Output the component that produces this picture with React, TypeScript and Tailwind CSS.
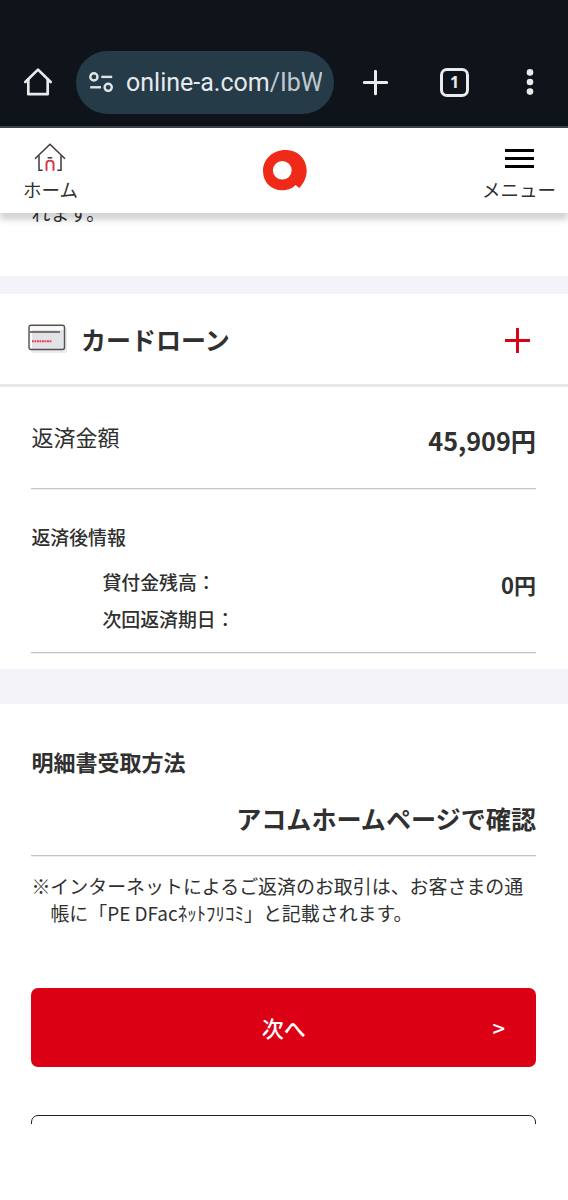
import React from 'react';

function HomeOutline() {
  return (
    <svg width="30" height="30" viewBox="0 0 30 30" fill="none" stroke="#e9eaeb" strokeWidth="2.7" strokeLinejoin="round" strokeLinecap="round">
      <path d="M2.3 15 L15 2.6 L27.7 15" />
      <path d="M5.3 12.5 V27.2 H24.7 V12.5" />
    </svg>
  );
}

function SiteSettingsIcon() {
  return (
    <svg width="24" height="20" viewBox="0 0 24 20" fill="none" stroke="#dfe5e8" strokeWidth="2.4">
      <circle cx="4.9" cy="4.9" r="3.6" />
      <path d="M12.3 4.9 H23.2" />
      <path d="M1.2 15.3 H12" />
      <circle cx="19.2" cy="15.3" r="3.6" />
    </svg>
  );
}

function BrowserBar() {
  return (
    <div className="flex h-32 items-end border-b-2 border-[#3b4248] bg-[#0f141a] pb-[12.5px]">
      <div className="flex h-[63px] w-full items-center">
        <div className="ml-[23px] w-[53px]">
          <HomeOutline />
        </div>
        <div className="flex h-[63px] w-[258px] shrink-0 items-center rounded-full bg-[#253b48] pl-[13px] pr-3">
          <SiteSettingsIcon />
          <div className="ml-[13px] flex-1 overflow-hidden whitespace-nowrap pt-[2px] font-[Roboto,sans-serif] text-[25px] leading-8 text-[#e6e9ec]">
            online-a.com<span className="text-[#c0c8cf]">/IbW</span>
          </div>
        </div>
        <svg className="ml-[28px] shrink-0" width="27" height="27" viewBox="0 0 27 27" stroke="#e9eaeb" strokeWidth="3" strokeLinecap="round">
          <path d="M13.5 2.3 V24.7 M2.3 13.5 H24.7" />
        </svg>
        <div className="ml-[51px] flex size-[29px] shrink-0 items-center justify-center rounded-[7px] border-[3px] border-[#e9eaeb] font-['Noto_Sans',sans-serif] text-[16px] font-bold leading-none text-[#e9eaeb]">
          1
        </div>
        <svg className="ml-[57px] shrink-0" width="8" height="28" viewBox="0 0 8 28" fill="#e9eaeb">
          <circle cx="4" cy="4.4" r="3.3" />
          <circle cx="4" cy="14" r="3.3" />
          <circle cx="4" cy="23.6" r="3.3" />
        </svg>
      </div>
    </div>
  );
}

function SiteHeader() {
  return (
    <header className="relative z-10 flex h-[85px] justify-between bg-white shadow-[0_7px_6px_rgba(0,0,0,0.17)]">
      <div className="ml-[22px] flex w-[57px] flex-col items-center pt-[15px]">
        <svg className="-ml-px" width="32" height="29" viewBox="0 0 32 29" fill="none" stroke="#40383a" strokeWidth="1.5">
          <path d="M1 15.8 L16 1.3 L31 15.8" />
          <path d="M5 12.5 V27.3 H8.7 M27 12.5 V27.3 H23.3" />
          <path d="M13.6 14.8 H18.2" />
          <path d="M12.5 27.8 V20.5 Q12.5 17.6 16 17.6 Q19.5 17.6 19.5 20.5 V27.8" stroke="#d9333f" strokeWidth="1.9" />
        </svg>
        <span className="mt-[4px] whitespace-nowrap text-[18.5px] leading-[26px]">ホーム</span>
      </div>
      <svg className="ml-[9px] mt-[22px]" width="44" height="41" viewBox="0 0 44 41">
        <path
          fill="#f02a18"
          fillRule="evenodd"
          d="M22.5 0 C34.5 0 43.7 8.5 43.7 20.5 C43.7 27.5 40.8 33.2 36.2 38 L32.6 35 C29 38.8 24.5 40.3 19 40.3 C8 40.3 0 32 0 21 C0 8.8 10 0 22.5 0 Z M19.3 11 A9.4 9.3 0 1 0 19.3 29.6 A9.4 9.3 0 1 0 19.3 11 Z"
        />
      </svg>
      <div className="mr-[11px] flex w-[76px] flex-col items-center pt-[21px]">
        <div className="flex w-[29px] flex-col gap-[5px]">
          <span className="h-[3px] bg-black" />
          <span className="h-[3px] bg-black" />
          <span className="h-[3px] bg-black" />
        </div>
        <span className="mt-[8px] whitespace-nowrap text-[18.5px] leading-[26px]">メニュー</span>
      </div>
    </header>
  );
}

function CardIcon() {
  return (
    <svg width="40" height="30" viewBox="0 0 40 30" fill="none">
      <rect x="3" y="3" width="36" height="26" rx="2" fill="#e9e9f1" />
      <rect x="1" y="1.2" width="35.5" height="24.3" rx="2" fill="#e1e3e6" />
      <path d="M2 2.2 H35.5 V6 H2 Z M2 6 H4 V24.5 H2 Z" fill="#fafafa" />
      <rect x="1" y="1.2" width="35.5" height="24.3" rx="2" stroke="#5a5051" strokeWidth="1.4" />
      <path d="M2 8 H32" stroke="#665d5e" strokeWidth="1.7" />
      <path d="M4 17.2 H24" stroke="#e64550" strokeWidth="2" strokeDasharray="1.9 0.6" />
    </svg>
  );
}

const Divider = () => <div className="h-px bg-[#c5c5c5] shadow-[0_1px_0_#eeeeee]" />;

export default function App() {
  return (
    <div
      lang="ja"
      className="h-[1200px] w-[568px] overflow-hidden bg-white font-['Noto_Sans_CJK_JP',sans-serif] text-[#303030]"
    >
      <BrowserBar />
      <SiteHeader />

      {/* tail of the previous note, scrolled under the header */}
      <div className="flex h-[63px] items-start px-[31.5px]">
        <p className="-mt-[14px] text-[18.9px] leading-[27px]">れます。</p>
      </div>
      <div className="h-[18px] bg-[#f4f3f9]" />

      <div className="flex h-[93px] items-center border-b-[3px] border-[#e8e8e8] pl-7">
        <CardIcon />
        <h2 className="ml-[13px] text-[25px] font-bold leading-9">カードローン</h2>
        <svg className="ml-auto mr-[37px] mt-[3px]" width="27" height="27" viewBox="0 0 27 27" stroke="#dc0014" strokeWidth="3">
          <path d="M13.5 1 V26 M1 13.5 H26" />
        </svg>
      </div>

      <section className="h-[282px] pl-[31.4px] pr-8">
        <div className="flex h-[101px] justify-between pt-[31px]">
          <span className="text-[22px] leading-9">返済金額</span>
          <span className="mt-1 text-[25.2px] font-bold leading-9">45,909円</span>
        </div>
        <Divider />
        <p className="pt-[34px] text-[18.9px] font-medium leading-7">返済後情報</p>
        <div className="flex justify-between pt-3">
          <div className="pl-[71px] text-[18.9px] font-medium leading-[37px]">
            <p>貸付金残高：</p>
            <p>次回返済期日：</p>
          </div>
          <span className="pt-[3px] text-[22px] font-bold leading-[37px]">0円</span>
        </div>
        <div className="pt-[15px]">
          <Divider />
        </div>
      </section>

      <div className="h-[35px] bg-[#f4f3f9]" />

      <section className="pl-[31.4px] pr-8">
        <h3 className="pt-[41px] text-[22px] font-bold leading-8">明細書受取方法</h3>
        <p className="pt-[23px] pb-[19px] text-right text-[25.1px] font-bold leading-9">アコムホームページで確認</p>
        <Divider />
        <p className="mt-[16px] pl-[19px] -indent-[19px] whitespace-nowrap text-[18.95px] leading-[27px]">
          ※インターネットによるご返済のお取引は、お客さまの通
          <br />
          帳に「PE DFacﾈｯﾄﾌﾘｺﾐ」と記載されます。
        </p>
        <button className="relative mt-[62px] block h-[79px] w-full rounded-[7px] bg-[#dc0014] text-[22px] font-medium text-white">
          次へ
          <span className="absolute right-[31px] top-[23px] text-[22px] leading-8">&gt;</span>
        </button>
        <div className="mt-12 h-[9px] overflow-hidden">
          <div className="h-[79px] rounded-[7px] border-[1.5px] border-[#222222]" />
        </div>
      </section>
    </div>
  );
}
